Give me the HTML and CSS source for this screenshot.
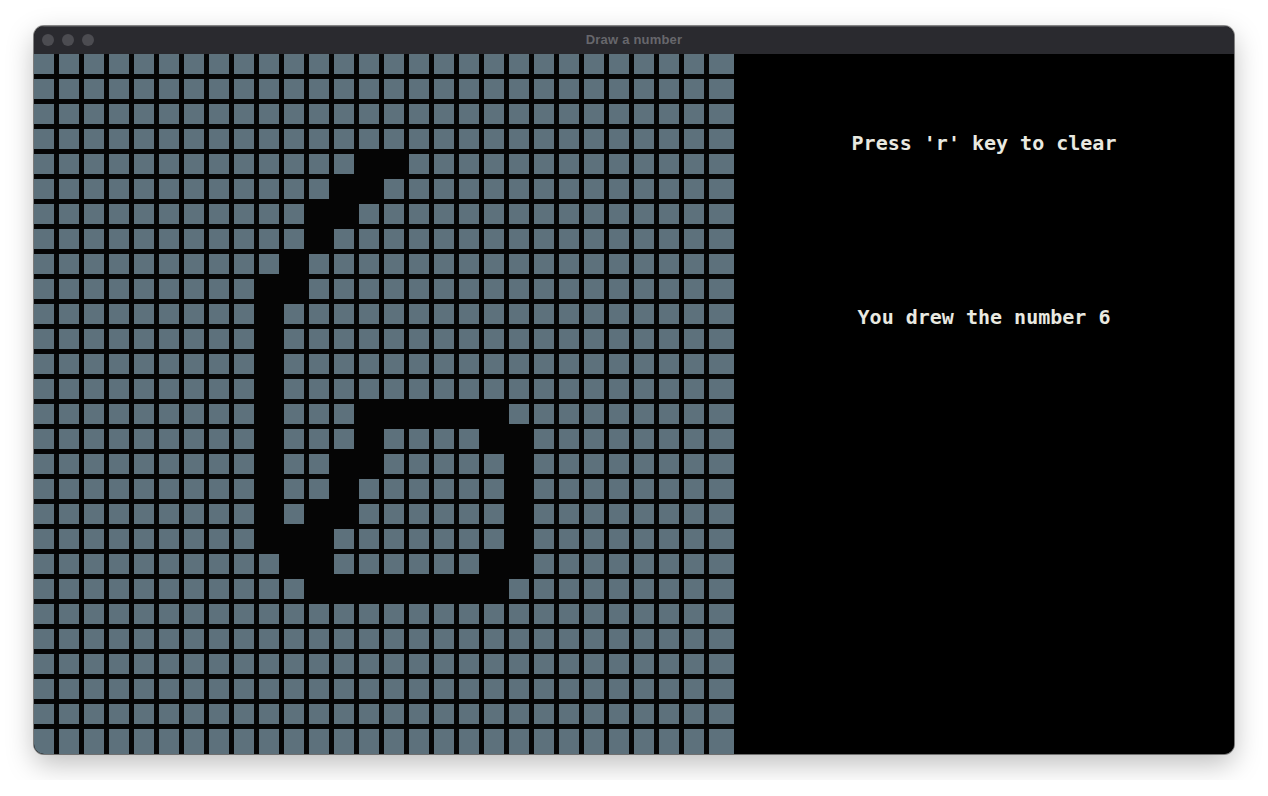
FILE: index.html
```html
<!DOCTYPE html>
<html lang="en">
<head>
<meta charset="utf-8">
<title>Draw a number</title>
<link rel="stylesheet" href="styles.css">
</head>
<body>
<div class="window">
  <div class="titlebar">
    <div class="lights"><span></span><span></span><span></span></div>
    <div class="title">Draw a number</div>
    <div></div>
  </div>
  <div class="content">
    <div class="board">
      <div class="row"><i></i><i></i><i></i><i></i><i></i><i></i><i></i> <i></i><i></i><i></i><i></i><i></i><i></i><i></i> <i></i><i></i><i></i><i></i><i></i><i></i><i></i> <i></i><i></i><i></i><i></i><i></i><i></i><i></i></div>
      <div class="row"><i></i><i></i><i></i><i></i><i></i><i></i><i></i> <i></i><i></i><i></i><i></i><i></i><i></i><i></i> <i></i><i></i><i></i><i></i><i></i><i></i><i></i> <i></i><i></i><i></i><i></i><i></i><i></i><i></i></div>
      <div class="row"><i></i><i></i><i></i><i></i><i></i><i></i><i></i> <i></i><i></i><i></i><i></i><i></i><i></i><i></i> <i></i><i></i><i></i><i></i><i></i><i></i><i></i> <i></i><i></i><i></i><i></i><i></i><i></i><i></i></div>
      <div class="row"><i></i><i></i><i></i><i></i><i></i><i></i><i></i> <i></i><i></i><i></i><i></i><i></i><i></i><i></i> <i></i><i></i><i></i><i></i><i></i><i></i><i></i> <i></i><i></i><i></i><i></i><i></i><i></i><i></i></div>
      <div class="row"><i></i><i></i><i></i><i></i><i></i><i></i><i></i> <i></i><i></i><i></i><i></i><i></i><i></i><i class="k"></i> <i class="k"></i><i></i><i></i><i></i><i></i><i></i><i></i> <i></i><i></i><i></i><i></i><i></i><i></i><i></i></div>
      <div class="row"><i></i><i></i><i></i><i></i><i></i><i></i><i></i> <i></i><i></i><i></i><i></i><i></i><i class="k"></i><i class="k"></i> <i></i><i></i><i></i><i></i><i></i><i></i><i></i> <i></i><i></i><i></i><i></i><i></i><i></i><i></i></div>
      <div class="row"><i></i><i></i><i></i><i></i><i></i><i></i><i></i> <i></i><i></i><i></i><i></i><i class="k"></i><i class="k"></i><i></i> <i></i><i></i><i></i><i></i><i></i><i></i><i></i> <i></i><i></i><i></i><i></i><i></i><i></i><i></i></div>
      <div class="row"><i></i><i></i><i></i><i></i><i></i><i></i><i></i> <i></i><i></i><i></i><i></i><i class="k"></i><i></i><i></i> <i></i><i></i><i></i><i></i><i></i><i></i><i></i> <i></i><i></i><i></i><i></i><i></i><i></i><i></i></div>
      <div class="row"><i></i><i></i><i></i><i></i><i></i><i></i><i></i> <i></i><i></i><i></i><i class="k"></i><i></i><i></i><i></i> <i></i><i></i><i></i><i></i><i></i><i></i><i></i> <i></i><i></i><i></i><i></i><i></i><i></i><i></i></div>
      <div class="row"><i></i><i></i><i></i><i></i><i></i><i></i><i></i> <i></i><i></i><i class="k"></i><i class="k"></i><i></i><i></i><i></i> <i></i><i></i><i></i><i></i><i></i><i></i><i></i> <i></i><i></i><i></i><i></i><i></i><i></i><i></i></div>
      <div class="row"><i></i><i></i><i></i><i></i><i></i><i></i><i></i> <i></i><i></i><i class="k"></i><i></i><i></i><i></i><i></i> <i></i><i></i><i></i><i></i><i></i><i></i><i></i> <i></i><i></i><i></i><i></i><i></i><i></i><i></i></div>
      <div class="row"><i></i><i></i><i></i><i></i><i></i><i></i><i></i> <i></i><i></i><i class="k"></i><i></i><i></i><i></i><i></i> <i></i><i></i><i></i><i></i><i></i><i></i><i></i> <i></i><i></i><i></i><i></i><i></i><i></i><i></i></div>
      <div class="row"><i></i><i></i><i></i><i></i><i></i><i></i><i></i> <i></i><i></i><i class="k"></i><i></i><i></i><i></i><i></i> <i></i><i></i><i></i><i></i><i></i><i></i><i></i> <i></i><i></i><i></i><i></i><i></i><i></i><i></i></div>
      <div class="row"><i></i><i></i><i></i><i></i><i></i><i></i><i></i> <i></i><i></i><i class="k"></i><i></i><i></i><i></i><i></i> <i></i><i></i><i></i><i></i><i></i><i></i><i></i> <i></i><i></i><i></i><i></i><i></i><i></i><i></i></div>
      <div class="row"><i></i><i></i><i></i><i></i><i></i><i></i><i></i> <i></i><i></i><i class="k"></i><i></i><i></i><i></i><i class="k"></i> <i class="k"></i><i class="k"></i><i class="k"></i><i class="k"></i><i class="k"></i><i></i><i></i> <i></i><i></i><i></i><i></i><i></i><i></i><i></i></div>
      <div class="row"><i></i><i></i><i></i><i></i><i></i><i></i><i></i> <i></i><i></i><i class="k"></i><i></i><i></i><i></i><i class="k"></i> <i></i><i></i><i></i><i></i><i class="k"></i><i class="k"></i><i></i> <i></i><i></i><i></i><i></i><i></i><i></i><i></i></div>
      <div class="row"><i></i><i></i><i></i><i></i><i></i><i></i><i></i> <i></i><i></i><i class="k"></i><i></i><i></i><i class="k"></i><i class="k"></i> <i></i><i></i><i></i><i></i><i></i><i class="k"></i><i></i> <i></i><i></i><i></i><i></i><i></i><i></i><i></i></div>
      <div class="row"><i></i><i></i><i></i><i></i><i></i><i></i><i></i> <i></i><i></i><i class="k"></i><i></i><i></i><i class="k"></i><i></i> <i></i><i></i><i></i><i></i><i></i><i class="k"></i><i></i> <i></i><i></i><i></i><i></i><i></i><i></i><i></i></div>
      <div class="row"><i></i><i></i><i></i><i></i><i></i><i></i><i></i> <i></i><i></i><i class="k"></i><i></i><i class="k"></i><i class="k"></i><i></i> <i></i><i></i><i></i><i></i><i></i><i class="k"></i><i></i> <i></i><i></i><i></i><i></i><i></i><i></i><i></i></div>
      <div class="row"><i></i><i></i><i></i><i></i><i></i><i></i><i></i> <i></i><i></i><i class="k"></i><i class="k"></i><i class="k"></i><i></i><i></i> <i></i><i></i><i></i><i></i><i></i><i class="k"></i><i></i> <i></i><i></i><i></i><i></i><i></i><i></i><i></i></div>
      <div class="row"><i></i><i></i><i></i><i></i><i></i><i></i><i></i> <i></i><i></i><i></i><i class="k"></i><i class="k"></i><i></i><i></i> <i></i><i></i><i></i><i></i><i class="k"></i><i class="k"></i><i></i> <i></i><i></i><i></i><i></i><i></i><i></i><i></i></div>
      <div class="row"><i></i><i></i><i></i><i></i><i></i><i></i><i></i> <i></i><i></i><i></i><i></i><i class="k"></i><i class="k"></i><i class="k"></i> <i class="k"></i><i class="k"></i><i class="k"></i><i class="k"></i><i class="k"></i><i></i><i></i> <i></i><i></i><i></i><i></i><i></i><i></i><i></i></div>
      <div class="row"><i></i><i></i><i></i><i></i><i></i><i></i><i></i> <i></i><i></i><i></i><i></i><i></i><i></i><i></i> <i></i><i></i><i></i><i></i><i></i><i></i><i></i> <i></i><i></i><i></i><i></i><i></i><i></i><i></i></div>
      <div class="row"><i></i><i></i><i></i><i></i><i></i><i></i><i></i> <i></i><i></i><i></i><i></i><i></i><i></i><i></i> <i></i><i></i><i></i><i></i><i></i><i></i><i></i> <i></i><i></i><i></i><i></i><i></i><i></i><i></i></div>
      <div class="row"><i></i><i></i><i></i><i></i><i></i><i></i><i></i> <i></i><i></i><i></i><i></i><i></i><i></i><i></i> <i></i><i></i><i></i><i></i><i></i><i></i><i></i> <i></i><i></i><i></i><i></i><i></i><i></i><i></i></div>
      <div class="row"><i></i><i></i><i></i><i></i><i></i><i></i><i></i> <i></i><i></i><i></i><i></i><i></i><i></i><i></i> <i></i><i></i><i></i><i></i><i></i><i></i><i></i> <i></i><i></i><i></i><i></i><i></i><i></i><i></i></div>
      <div class="row"><i></i><i></i><i></i><i></i><i></i><i></i><i></i> <i></i><i></i><i></i><i></i><i></i><i></i><i></i> <i></i><i></i><i></i><i></i><i></i><i></i><i></i> <i></i><i></i><i></i><i></i><i></i><i></i><i></i></div>
      <div class="row"><i></i><i></i><i></i><i></i><i></i><i></i><i></i> <i></i><i></i><i></i><i></i><i></i><i></i><i></i> <i></i><i></i><i></i><i></i><i></i><i></i><i></i> <i></i><i></i><i></i><i></i><i></i><i></i><i></i></div>
    </div>
    <div class="panel">
      <p class="msg">Press 'r' key to clear</p>
      <p class="msg">You drew the number 6</p>
    </div>
  </div>
</div>
</body>
</html>
```
FILE: styles.css
```css
html, body {
  margin: 0;
  background: #ffffff;
}

body {
  padding: 26px 34px;
}

.window {
  width: 1200px;
  height: 728px;
  border-radius: 10px;
  overflow: hidden;
  background: #000;
  display: flex;
  flex-direction: column;
  box-shadow: 0 0 0 1px rgba(0, 0, 0, 0.45), 0 10px 28px rgba(0, 0, 0, 0.26);
}

.titlebar {
  flex: 0 0 28px;
  height: 28px;
  background: #2a2a2f;
  display: grid;
  grid-template-columns: 1fr auto 1fr;
  align-items: center;
  box-shadow: inset 0 1px 0 rgba(255, 255, 255, 0.16);
}

.lights {
  display: flex;
  gap: 8px;
  padding-left: 8px;
}

.lights span {
  width: 12px;
  height: 12px;
  border-radius: 50%;
  background: #4c4c51;
}

.title {
  font: bold 13px "Liberation Sans", Arial, sans-serif;
  color: #67676c;
  line-height: 28px;
  letter-spacing: 0.2px;
}

.content {
  flex: 1;
  display: flex;
}

.board {
  width: 700px;
  height: 700px;
  flex: none;
  background: #050505;
  display: flex;
  flex-direction: column;
  gap: 5px;
}

.row {
  display: flex;
  gap: 5px;
}

.row i {
  flex: none;
  width: 20px;
  height: 20px;
  background: #5d717c;
}

.row i:last-child {
  width: 25px;
}

.row:last-child i {
  height: 25px;
}

.row i.k {
  background: #050505;
}

.panel {
  flex: 1;
  background: #000;
  display: flex;
  flex-direction: column;
  align-items: center;
  padding-top: 77px;
  gap: 150px;
}

.msg {
  margin: 0;
  font: bold 20px/24px "DejaVu Sans Mono", "Liberation Mono", monospace;
  color: #e9e9e0;
  white-space: pre;
}
```
